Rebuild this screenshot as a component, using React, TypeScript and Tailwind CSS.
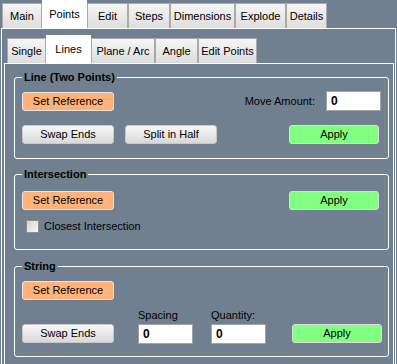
import React from "react";

type TabProps = { label: string; w: string; active?: boolean };

function Tab({ label, w, active }: TabProps) {
  if (active) {
    return (
      <div className={`${w} h-[28px] bg-white flex items-center justify-center text-black`}>
        {label}
      </div>
    );
  }
  return (
    <div
      className={`${w} h-[25px] border border-b-0 border-[#a9a9a9] bg-linear-to-b from-[#f5f5f5] to-[#dedede] flex items-center justify-center text-black`}
    >
      {label}
    </div>
  );
}

type BtnProps = { label: string; kind?: "gray" | "orange" | "green"; className?: string };

function Btn({ label, kind = "gray", className = "" }: BtnProps) {
  const base =
    "h-[19px] rounded-[3px] border flex items-center justify-center text-[11px] leading-none text-black shrink-0";
  const skin =
    kind === "orange"
      ? "bg-[#ffb27a] border-[#e9e4df]"
      : kind === "green"
      ? "bg-[#80ff80] border-[#dcdcdc]"
      : "border-[#c9c9c9] bg-linear-to-b from-[#f8f8f8] to-[#d9d9d9]";
  return <div className={`${base} ${skin} ${className}`}>{label}</div>;
}

function NumBox({ className = "" }: { className?: string }) {
  return (
    <div
      className={`w-[55px] h-[20px] bg-white border border-[#a3a3a3] flex items-center pl-[4px] text-[12px] font-bold text-black shrink-0 ${className}`}
    >
      0
    </div>
  );
}

export default function App() {
  return (
    <div className="w-[397px] h-[364px] overflow-hidden bg-[#708090] font-['Liberation_Sans',Arial,sans-serif] text-[11px] text-black">
      {/* outer tabs */}
      <div className="flex items-end h-[28px] pl-[2px]">
        <Tab label="Main" w="w-[40px]" />
        <Tab label="Points" w="w-[45px]" active />
        <Tab label="Edit" w="w-[41px]" />
        <Tab label="Steps" w="w-[42px]" />
        <Tab label="Dimensions" w="w-[65px]" />
        <Tab label="Explode" w="w-[51px]" />
        <Tab label="Details" w="w-[41px]" />
      </div>

      {/* outer panel */}
      <div className="ml-[1px] w-[395px] h-[336px] border-l border-r border-t border-white pt-[6px] pl-[2px] flex flex-col">
        {/* inner tabs */}
        <div className="flex items-end h-[28px] pl-[3px]">
          <Tab label="Single" w="w-[39px]" />
          <Tab label="Lines" w="w-[45px]" active />
          <Tab label="Plane / Arc" w="w-[64px]" />
          <Tab label="Angle" w="w-[43px]" />
          <Tab label="Edit Points" w="w-[59px]" />
        </div>

        {/* inner panel */}
        <div className="w-[390px] flex-1 border-l border-r border-t border-white">
          {/* Line (Two Points) */}
          <fieldset className="ml-[9px] mt-[6px] w-[375px] h-[89px] border border-white rounded-[3px] min-w-0">
            <legend className="ml-[7px] px-[2px] font-bold text-[11px] leading-[14px]">Line (Two Points)</legend>
            <div className="flex items-center h-[20px] mt-[7px]">
              <Btn label="Set Reference" kind="orange" className="ml-[7px] w-[92px]" />
              <span className="ml-auto">Move Amount:</span>
              <NumBox className="ml-[11px] mr-[7px]" />
            </div>
            <div className="flex items-center mt-[14px]">
              <Btn label="Swap Ends" className="ml-[7px] w-[92px]" />
              <Btn label="Split in Half" className="ml-[11px] w-[92px]" />
              <Btn label="Apply" kind="green" className="ml-auto mr-[9px] w-[90px]" />
            </div>
          </fieldset>

          {/* Intersection */}
          <fieldset className="ml-[9px] mt-[8px] w-[375px] h-[83px] border border-white rounded-[3px] min-w-0">
            <legend className="ml-[7px] px-[2px] font-bold text-[11px] leading-[14px]">Intersection</legend>
            <div className="flex items-center mt-[10px]">
              <Btn label="Set Reference" kind="orange" className="ml-[7px] w-[92px]" />
              <Btn label="Apply" kind="green" className="ml-auto mr-[9px] w-[90px]" />
            </div>
            <div className="flex items-center h-[13px] mt-[10px]">
              <div className="ml-[11px] w-[13px] h-[13px] border border-[#8f8f8f] bg-linear-to-br from-[#d6d6d6] to-[#f6f6f6] shrink-0" />
              <span className="ml-[5px]">Closest Intersection</span>
            </div>
          </fieldset>

          {/* String */}
          <fieldset className="ml-[9px] mt-[9px] w-[375px] h-[98px] border border-white rounded-[3px] min-w-0">
            <legend className="ml-[7px] px-[2px] font-bold text-[11px] leading-[14px]">String</legend>
            <div className="flex mt-[8px]">
              <Btn label="Set Reference" kind="orange" className="ml-[7px] w-[92px]" />
            </div>
            <div className="flex items-end mt-[9px]">
              <Btn label="Swap Ends" className="ml-[7px] w-[92px] mb-[1px]" />
              <div className="ml-[24px] flex flex-col">
                <span className="leading-[13px]">Spacing</span>
                <NumBox className="mt-[2px]" />
              </div>
              <div className="ml-[18px] flex flex-col">
                <span className="leading-[13px]">Quantity:</span>
                <NumBox className="mt-[2px]" />
              </div>
              <Btn label="Apply" kind="green" className="ml-auto mr-[6px] w-[90px] mb-[1px]" />
            </div>
          </fieldset>
        </div>
      </div>
    </div>
  );
}
